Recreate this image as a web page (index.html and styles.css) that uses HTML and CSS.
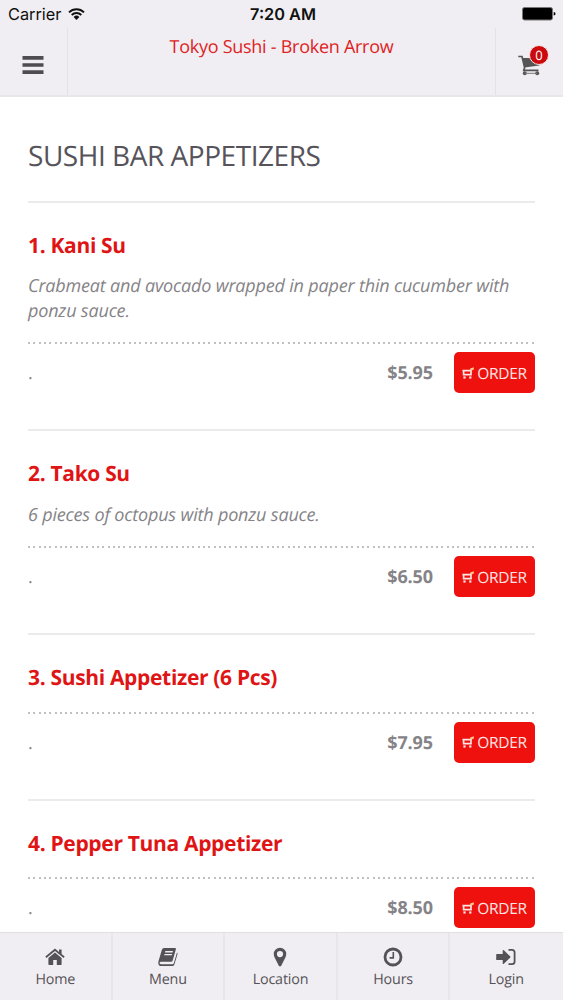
FILE: index.html
```html
<!DOCTYPE html>
<html lang="en">
  <head>
    <meta charset="UTF-8" />
    <meta name="viewport" content="width=device-width, initial-scale=1.0" />
    <title>Tokyo Sushi - Broken Arrow</title>
    <link rel="stylesheet" href="styles.css">
  </head>
  <body>
    <svg class="sprite">
      <symbol id="icon-order" viewBox="0 0 12 12">
        <path d="M0.4 3.7H8.8M1.6 3.7V7.6H9V2.6" fill="none" stroke="currentColor" stroke-width="1.7" />
        <path d="M8.2 3.4V1.6L11.8 0.3V2.4L9.8 3.4Z" fill="#ffc98a" />
        <rect x="1.4" y="9.4" width="2.2" height="2.2" fill="currentColor" />
        <rect x="7.2" y="9.4" width="2.2" height="2.2" fill="currentColor" />
      </symbol>
    </svg>
    <div class="app">
      <div class="status-bar">
        <div class="carrier">
          <span>Carrier</span>
          <svg class="wifi" viewBox="0 0 17 12">
            <path d="M1 4.3A10.6 10.6 0 0 1 16 4.3M3.7 7A6.8 6.8 0 0 1 13.3 7" fill="none" stroke="#111" stroke-width="1.9" />
            <path d="M5.6 9A4.1 4.1 0 0 1 11.4 9L8.5 12Z" fill="#111" />
          </svg>
        </div>
        <div class="time">7:20 AM</div>
        <svg class="battery" viewBox="0 0 34 14">
          <rect x="0.5" y="0.5" width="30" height="12.5" rx="2" fill="#000" stroke="#777" />
          <path d="M31.7 5Q33.5 5.3 33.5 6.8T31.7 8.6Z" fill="#000" />
        </svg>
      </div>
      <header class="header">
        <div class="header-btn">
          <svg class="bars" viewBox="0 0 22 18">
            <path d="M0.5 1.9H21.5M0.5 9H21.5M0.5 16.1H21.5" stroke="#4e4c50" stroke-width="3.6" />
          </svg>
        </div>
        <div class="header-title">Tokyo Sushi - Broken Arrow</div>
        <div class="header-btn header-cart">
          <svg class="cart" viewBox="0 0 23 21">
            <path d="M0.3 1.5H4L6.6 12.6L5.8 15.3H20.5" fill="none" stroke="#555" stroke-width="1.7" />
            <path d="M4.4 3H22.4L21.4 10.4L6.6 12.4Z" fill="#555" />
            <circle cx="6.8" cy="18.3" r="2" fill="#555" />
            <circle cx="19.2" cy="18.3" r="2" fill="#555" />
            <path d="M6.8 18.3H19.2" stroke="#777" stroke-width="1" />
          </svg>
          <span class="badge">0</span>
        </div>
      </header>

      <main class="content">
        <h1 class="category">SUSHI BAR APPETIZERS</h1>
        <section class="item">
          <h2 class="item-name">1. Kani Su</h2>
          <p class="item-desc">Crabmeat and avocado wrapped in paper thin cucumber with ponzu sauce.</p>
          <div class="item-row">
            <span class="item-dot">.</span>
            <span class="price">$5.95</span>
            <a class="order"><svg><use href="#icon-order" /></svg><span>ORDER</span></a>
          </div>
        </section>
        <section class="item">
          <h2 class="item-name">2. Tako Su</h2>
          <p class="item-desc">6 pieces of octopus with ponzu sauce.</p>
          <div class="item-row">
            <span class="item-dot">.</span>
            <span class="price">$6.50</span>
            <a class="order"><svg><use href="#icon-order" /></svg><span>ORDER</span></a>
          </div>
        </section>
        <section class="item">
          <h2 class="item-name">3. Sushi Appetizer (6 Pcs)</h2>
          <div class="item-row">
            <span class="item-dot">.</span>
            <span class="price">$7.95</span>
            <a class="order"><svg><use href="#icon-order" /></svg><span>ORDER</span></a>
          </div>
        </section>
        <section class="item">
          <h2 class="item-name">4. Pepper Tuna Appetizer</h2>
          <div class="item-row">
            <span class="item-dot">.</span>
            <span class="price">$8.50</span>
            <a class="order"><svg><use href="#icon-order" /></svg><span>ORDER</span></a>
          </div>
        </section>
      </main>

      <nav class="tabs">
        <a class="tab">
          <svg viewBox="0 0 20 20">
            <path d="M10 5.6L16.6 11V17.2Q16.6 18 15.8 18H11.8V13H8.2V18H4.2Q3.4 18 3.4 17.2V11Z" />
            <path d="M10 1.6L14 4.9V2.4H16.6V7L19.7 9.6L18.6 10.9L10 3.9L1.4 10.9L0.3 9.6Z" />
          </svg>
          <span>Home</span>
        </a>
        <a class="tab">
          <svg viewBox="0 0 20 20">
            <path d="M6 1H17Q18.3 1 17.9 2.3L14.6 13.7Q14.3 14.8 13.1 14.8H3Q1.8 14.8 1.5 15.8Q1.5 17.2 3 17.2H14.2Q15.5 17.2 15.9 16L19 5.5Q19.9 6 19.5 7L16.4 17.4Q15.8 19 14.2 19H3Q0.6 19 0.3 16.2Q0.2 15 0.7 13.6L3.7 3.2Q4.4 1 6 1ZM7.4 4.1L7 5.4H14.6L15 4.1ZM6.6 7L6.2 8.3H13.8L14.2 7Z" fill-rule="evenodd" />
          </svg>
          <span>Menu</span>
        </a>
        <a class="tab">
          <svg viewBox="0 0 20 20">
            <path d="M10 0.8A6.2 6.2 0 0 1 16.2 7Q16.2 8.7 15.6 9.9L11.2 18.7Q10 20.3 8.8 18.7L4.4 9.9Q3.8 8.7 3.8 7A6.2 6.2 0 0 1 10 0.8ZM10 4A3.1 3.1 0 1 0 10 10.2A3.1 3.1 0 1 0 10 4Z" fill-rule="evenodd" />
          </svg>
          <span>Location</span>
        </a>
        <a class="tab">
          <svg viewBox="0 0 20 20">
            <circle cx="10" cy="10" r="8" fill="none" stroke="currentColor" stroke-width="2.8" />
            <path d="M10.3 5V10.9H6.6" fill="none" stroke="currentColor" stroke-width="1.6" />
          </svg>
          <span>Hours</span>
        </a>
        <a class="tab">
          <svg viewBox="0 0 20 20">
            <path d="M0.8 7H6.7V3.6Q7 2.6 7.9 3.3L14.1 9.3Q14.8 10 14.1 10.7L7.9 16.7Q7 17.4 6.7 16.4V13H0.8Q0.2 13 0.2 12.4V7.6Q0.2 7 0.8 7Z" />
            <path d="M12.5 2.9H16Q18.6 2.9 18.6 5.5V14.5Q18.6 17.1 16 17.1H12.5" fill="none" stroke="currentColor" stroke-width="1.8" />
          </svg>
          <span>Login</span>
        </a>
      </nav>
    </div>
  </body>
</html>
```

FILE: styles.css
```css
* {
  margin: 0;
  padding: 0;
  box-sizing: border-box;
}

body {
  background: #fff;
  font-family: "Open Sans", "Noto Sans", sans-serif;
  text-rendering: geometricPrecision;
}

.sprite {
  display: none;
}

.app {
  display: flex;
  flex-direction: column;
  width: 100%;
  height: 100vh;
  overflow: hidden;
}

.status-bar {
  display: grid;
  grid-template-columns: 1fr auto 1fr;
  align-items: center;
  flex: none;
  height: 28px;
  padding: 0 7px 0 8px;
  background: #f0eef2;
  color: #111;
  font-family: Inter, sans-serif;
  font-size: 16.3px;
}

.carrier {
  display: flex;
  align-items: center;
  gap: 7px;
}

.wifi {
  width: 17px;
  height: 12px;
  margin-bottom: 1px;
}

.time {
  padding-left: 2px;
  font-weight: 600;
}

.battery {
  justify-self: end;
  width: 34px;
  height: 14px;
}

.header {
  display: flex;
  flex: none;
  height: 69px;
  background: #f0eef2;
  border-bottom: 2px solid #e8e6e9;
}

.header-btn {
  display: flex;
  align-items: center;
  justify-content: center;
  width: 68px;
  padding: 7px 1px 0 0;
  border-right: 1px solid #e4e2e6;
}

.header-cart {
  position: relative;
  border-right: 0;
  border-left: 1px solid #e4e2e6;
}

.bars {
  width: 22px;
  height: 18px;
}

.header-title {
  flex: 1;
  padding-top: 7px;
  color: #df2223;
  font-size: 18px;
  letter-spacing: -0.27px;
  line-height: 24px;
  text-align: center;
}

.cart {
  width: 23px;
  height: 21px;
}

.badge {
  position: absolute;
  top: 17px;
  right: 14px;
  width: 20px;
  height: 20px;
  border: 1px solid #f7e4e6;
  border-radius: 50%;
  background: #cc0a0d;
  color: #fff;
  font-size: 13px;
  line-height: 18px;
  text-align: center;
}

.content {
  flex: 1;
  min-height: 0;
  padding: 0 28px;
  overflow: hidden;
}

.category {
  height: 106px;
  padding-top: 40px;
  border-bottom: 2px solid #ebebec;
  color: #56545a;
  font-size: 28px;
  font-weight: 400;
  letter-spacing: -0.46px;
  line-height: 38px;
}

.item {
  padding: 31px 0 36px;
  border-bottom: 2px solid #ebebec;
}

.item-name {
  margin-bottom: 21.3px;
  color: #df1515;
  font-size: 21px;
  font-weight: 700;
  letter-spacing: -0.33px;
  line-height: 24px;
}

.item-desc {
  margin: -5px 0 19.2px;
  color: #858387;
  font-size: 18px;
  font-style: italic;
  letter-spacing: -0.18px;
  line-height: 24.5px;
}

.item-row {
  display: flex;
  align-items: center;
  padding-top: 10px;
  background: repeating-linear-gradient(90deg, #c0c0c3 0 2px, transparent 2px 5.3px) top / 100% 2px no-repeat;
  color: #858387;
  font-size: 18px;
  letter-spacing: -0.1px;
}

.item-dot {
  padding-top: 1px;
}

.price {
  margin-left: auto;
  margin-right: 21px;
  padding-top: 1px;
  font-weight: 700;
}

.order {
  display: flex;
  align-items: center;
  justify-content: center;
  gap: 3px;
  width: 81px;
  height: 41px;
  border-radius: 5px;
  background: #ee110d;
  color: #fbe6e4;
  font-size: 15.5px;
  letter-spacing: -0.35px;
}

.order svg {
  width: 12px;
  height: 12px;
}

.tabs {
  display: grid;
  grid-template-columns: repeat(5, 1fr);
  flex: none;
  height: 68px;
  background: #f0eef2;
  border-top: 1px solid #e0dfe2;
}

.tab {
  display: flex;
  flex-direction: column;
  align-items: center;
  padding-top: 14px;
  border-right: 2px solid #e8e6ea;
  color: #555257;
  font-size: 14.3px;
  letter-spacing: -0.15px;
  line-height: 20px;
}

.tab:last-child {
  border-right: 0;
  padding-right: 1px;
}

.tab svg {
  width: 20px;
  height: 20px;
  margin-bottom: 3px;
  fill: currentColor;
}
```
